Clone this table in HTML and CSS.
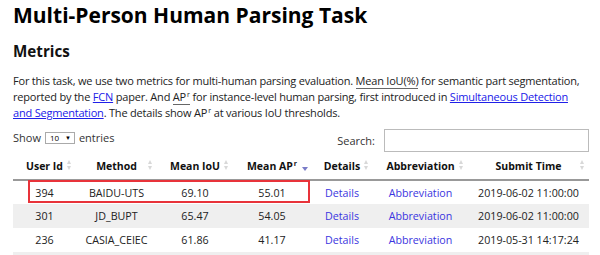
FILE: index.html
```html
<!DOCTYPE html>
<html>
<head>
<meta charset="utf-8">
<link rel="stylesheet" href="styles.css">
</head>
<body>
<div class="page">
  <h1 class="title">Multi-Person Human Parsing Task</h1>
  <h2 class="subtitle">Metrics</h2>
  <p class="desc">For this task, we use two metrics for multi-human parsing evaluation. <abbr class="abbr">Mean IoU(%)</abbr> for semantic part segmentation, reported by the <a class="link" href="#">FCN</a> paper. And <abbr class="abbr">AP<sup>r</sup></abbr> for instance-level human parsing, first introduced in <a class="link" href="#">Simultaneous Detection and Segmentation</a>. The details show AP<sup>r</sup> at various IoU thresholds.</p>
  <div class="controls">
    <label class="length">Show <span class="select">10 <span class="caret">&#9660;</span></span> entries</label>
    <label class="search">Search: <span class="input"></span></label>
  </div>
  <div class="table-wrap">
    <table class="results">
      <thead>
        <tr>
          <th class="c1">User Id<span class="sort"></span></th>
          <th class="c2">Method<span class="sort"></span></th>
          <th class="c3">Mean IoU<span class="sort"></span></th>
          <th class="c4">Mean AP<sup>r</sup><span class="sort desc"></span></th>
          <th class="c5">Details<span class="sort"></span></th>
          <th class="c6">Abbreviation<span class="sort"></span></th>
          <th class="c7">Submit Time<span class="sort"></span></th>
        </tr>
      </thead>
      <tbody>
        <tr class="odd first">
          <td>394</td><td>BAIDU-UTS</td><td>69.10</td><td>55.01</td>
          <td><a class="tlink" href="#">Details</a></td><td><a class="tlink" href="#">Abbreviation</a></td><td>2019-06-02 11:00:00</td>
        </tr>
        <tr class="even">
          <td>301</td><td>JD_BUPT</td><td>65.47</td><td>54.05</td>
          <td><a class="tlink" href="#">Details</a></td><td><a class="tlink" href="#">Abbreviation</a></td><td>2019-06-02 11:00:00</td>
        </tr>
        <tr class="odd">
          <td>236</td><td>CASIA_CEIEC</td><td>61.86</td><td>41.17</td>
          <td><a class="tlink" href="#">Details</a></td><td><a class="tlink" href="#">Abbreviation</a></td><td>2019-05-31 14:17:24</td>
        </tr>
        <tr class="even">
          <td></td><td></td><td></td><td></td><td></td><td></td><td></td>
        </tr>
      </tbody>
    </table>
    <div class="highlight"></div>
  </div>
</div>
</body>
</html>
```
FILE: styles.css
```css
html, body {
  margin: 0;
  padding: 0;
  background: #fff;
}
body {
  font-family: "Open Sans", "Noto Sans", "Liberation Sans", sans-serif;
  color: #222;
  overflow: hidden;
  height: 255px;
}
.page {
  padding: 0 11px 0 13px;
}
.title {
  margin: 0;
  font-size: 21px;
  line-height: 30px;
  font-weight: 700;
  color: #000;
}
.subtitle {
  margin: 10px 0 0;
  font-size: 15.2px;
  line-height: 22px;
  font-weight: 700;
  color: #111;
}
.desc {
  margin: 11px 0 0;
  max-width: 571px;
  font-size: 11px;
  line-height: 16px;
  letter-spacing: -0.2px;
  color: #222;
}
.desc sup, .results sup {
  font-size: 7px;
  line-height: 0;
  letter-spacing: 0;
  vertical-align: 4px;
  margin-left: 1px;
}
.abbr {
  text-decoration: none;
  border-bottom: 1px solid #666;
}
.link {
  color: #2020e8;
  text-decoration: underline;
}
.controls {
  margin-top: 8px;
  display: flex;
  justify-content: space-between;
  align-items: center;
  font-size: 11px;
  color: #333;
  height: 23px;
}
.length {
  display: flex;
  align-items: center;
  gap: 4px;
  margin-top: -6px;
}
.select {
  display: inline-flex;
  align-items: center;
  justify-content: space-between;
  box-sizing: border-box;
  width: 30px;
  height: 12px;
  border: 1px solid #aaa;
  font-size: 8px;
  padding: 0 3px 0 4px;
  color: #000;
}
.caret {
  font-size: 6px;
}
.search {
  display: flex;
  align-items: center;
  gap: 9px;
}
.input {
  display: block;
  box-sizing: border-box;
  width: 205px;
  height: 23px;
  border: 1px solid #bbb;
}
.table-wrap {
  position: relative;
}
.results {
  width: 576px;
  border-collapse: collapse;
  table-layout: fixed;
  font-size: 10.7px;
  color: #222;
}
.results th {
  position: relative;
  font-weight: 700;
  font-size: 10.5px;
  color: #111;
  height: 27px;
  padding: 0;
  text-align: center;
  border-bottom: 2px solid #999;
  vertical-align: middle;
}
.results td {
  text-align: center;
  padding: 0;
  height: 24px;
}
.results tr.first td {
  height: 23px;
}
.results tr.even td {
  background: #efefef;
}
.c1 { width: 63px; }
.c2 { width: 81px; }
.c3 { width: 76px; }
.c4 { width: 78px; }
.c5 { width: 62px; }
.c6 { width: 95px; }
.c7 { width: 121px; }
.tlink {
  color: #3b35e0;
  text-decoration: none;
}
.sort {
  position: absolute;
  right: 4px;
  top: 50%;
  width: 5px;
  height: 11px;
  margin-top: -6px;
}
.sort::before, .sort::after {
  content: "";
  position: absolute;
  left: 0;
  border-left: 2.5px solid transparent;
  border-right: 2.5px solid transparent;
}
.sort::before {
  top: 0;
  border-bottom: 4px solid #d8d8d8;
}
.sort::after {
  bottom: 1px;
  border-top: 4px solid #d8d8d8;
}
.sort.desc::before {
  display: none;
}
.sort.desc::after {
  bottom: 0;
  border-left-width: 3px;
  border-right-width: 3px;
  border-top: 4px solid #7a7cc8;
}
.highlight {
  position: absolute;
  left: 15px;
  top: 28px;
  width: 282px;
  height: 23px;
  box-sizing: border-box;
  border: 2px solid #e8333a;
  pointer-events: none;
}
```
